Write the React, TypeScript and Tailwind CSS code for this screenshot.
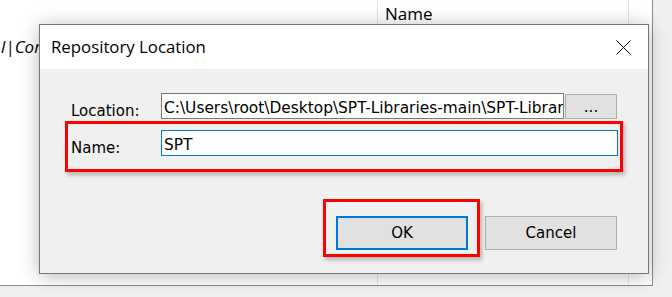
export default function App() {
  const ui = { fontFamily: '"DejaVu Sans", Verdana, sans-serif' };
  const title = { fontFamily: '"Open Sans", "Noto Sans", sans-serif' };

  return (
    <div className="relative w-[672px] h-[297px] overflow-hidden bg-[#f0f0f0]" style={ui}>
      {/* Background app window */}
      <div className="flex w-[653px] h-[286px] bg-white border-r border-b border-[#8c8c8c]">
        <div className="w-[378px] border-r border-[#e3e3e3] pt-[36px] overflow-hidden">
          <div className="ml-[1px] text-[17px] italic text-black leading-[22px] whitespace-nowrap" style={title}>
            l|Comment
          </div>
        </div>
        <div className="w-[251px] border-r border-[#e3e3e3] pl-[7px] pt-[2px]">
          <div className="text-[17px] text-black leading-[24px]" style={title}>Name</div>
        </div>
        <div className="flex-1" />
      </div>

      {/* Dialog */}
      <div className="absolute left-[39px] top-[24px] w-[610px] h-[250px] border border-[#777777] bg-[#f0f0f0] shadow-[0_2px_18px_rgba(0,0,0,0.28)] flex flex-col">
        <div className="h-[44px] bg-white flex items-center justify-between pl-[11px] pr-[17px]">
          <span className="text-[16.8px] text-black" style={title}>Repository Location</span>
          <svg width="15" height="15" viewBox="0 0 15 15">
            <path d="M0.5 0.5 L14.5 14.5 M14.5 0.5 L0.5 14.5" stroke="#000" strokeWidth="1" />
          </svg>
        </div>

        <div className="flex-1 flex flex-col">
          {/* Location row */}
          <div className="flex items-start mt-[24px] ml-[31px]">
            <span className="w-[90px] pt-[9px] text-[15px] leading-[18px] text-black">Location:</span>
            <div className="w-[403px] h-[26px] border border-[#7a7a7a] bg-white overflow-hidden whitespace-nowrap pl-[2px] pt-[5px] text-[15.4px] leading-[18px] text-black">
              C:\Users\root\Desktop\SPT-Libraries-main\SPT-Librar
            </div>
            <div className="ml-[1px] mt-[1px] w-[52px] h-[25px] border border-[#adadad] bg-[#e1e1e1] flex items-center justify-center text-[15px] leading-[18px] text-black">
              ...
            </div>
          </div>

          {/* Name row (highlighted) */}
          <div className="ml-[25px] mt-[1px] w-[558px] h-[51px] border-[3px] border-[#ff0000] shadow-[2px_3px_4px_rgba(0,0,0,0.25)] flex items-start pl-[3px] pt-[6px]">
            <span className="w-[90px] pt-[9px] text-[15px] leading-[18px] text-black">Name:</span>
            <div className="w-[457px] h-[26px] border border-[#0078d7] bg-white pl-[2px] pt-[5px] text-[15.4px] leading-[18px] text-black">
              SPT
            </div>
          </div>

          {/* Buttons */}
          <div className="flex items-start mt-[27px] ml-[283px]">
            <div className="w-[157px] h-[58px] border-[3px] border-[#ff0000] shadow-[2px_3px_4px_rgba(0,0,0,0.25)] pl-[10px] pt-[14px]">
              <div className="w-[132px] h-[34px] border-2 border-[#0078d7] bg-[#e1e1e1] flex items-center justify-center text-[15px] text-black">
                OK
              </div>
            </div>
            <div className="ml-[5px] mt-[17px] w-[132px] h-[34px] border border-[#adadad] bg-[#e1e1e1] flex items-center justify-center text-[15px] text-black">
              Cancel
            </div>
          </div>
        </div>
      </div>
    </div>
  );
}
